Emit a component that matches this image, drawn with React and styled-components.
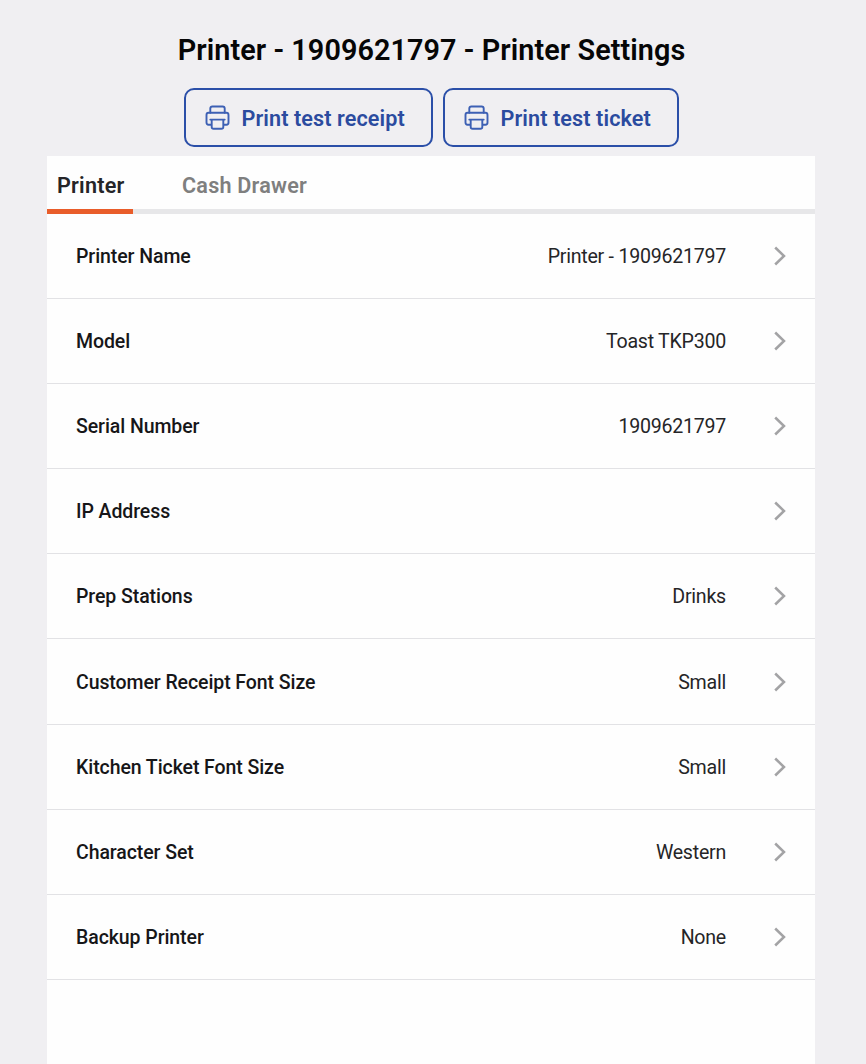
import React from 'react';
import styled, { createGlobalStyle } from 'styled-components';

const GlobalStyle = createGlobalStyle`
  * { box-sizing: border-box; }
  body { margin: 0; background: #f0eff2; font-family: Roboto, "Liberation Sans", sans-serif; }
`;

const Page = styled.main`
  height: 1064px;
  padding: 0 51px 0 47px;
  display: flex;
  flex-direction: column;
  overflow: hidden;
`;

const Title = styled.h1`
  margin: 34px 0 0;
  height: 54px;
  padding-left: 1px;
  line-height: 33px;
  font-size: 28.8px;
  font-weight: 600;
  letter-spacing: 0.08px;
  text-align: center;
  white-space: nowrap;
  color: #060606;
`;

const Actions = styled.div`
  display: flex;
  justify-content: center;
  gap: 10px;
  margin-bottom: 9px;
`;

const ActionButton = styled.button`
  width: ${(p) => p.$width}px;
  height: 59px;
  padding: 1px 0 0 19px;
  display: flex;
  align-items: center;
  gap: 11px;
  border: 2px solid #2b4fa8;
  border-radius: 10px;
  background: transparent;
  color: #2b4b9f;
  font: 600 21.6px Roboto, "Liberation Sans", sans-serif;
  letter-spacing: 0.1px;
  white-space: nowrap;
`;

const Panel = styled.section`
  flex: 1;
  background: #fefefe;
`;

const Tabs = styled.nav`
  display: flex;
  gap: 39px;
  height: 58px;
  box-shadow: inset 0 -5px #e7e7e9;
`;

const Tab = styled.a`
  height: 58px;
  padding: 0 8.5px 0 10px;
  line-height: 60px;
  font-size: 21.6px;
  font-weight: 600;
  letter-spacing: 0.22px;
  white-space: nowrap;
  color: ${(p) => (p.$active ? '#252528' : '#7f7f7f')};
  box-shadow: ${(p) => (p.$active ? 'inset 0 -5px #e95d2a' : 'none')};
`;

const Row = styled.div`
  display: flex;
  align-items: center;
  height: 85.1px;
  padding: 0 28px 0 29px;
  border-bottom: 1px solid #e2e2e5;
  white-space: nowrap;
`;

const Label = styled.span`
  flex: 1;
  padding-top: 1px;
  font-size: 19.5px;
  letter-spacing: -0.08px;
  font-weight: 500;
  color: #161618;
`;

const Value = styled.span`
  padding-top: 1px;
  font-size: 19.6px;
  letter-spacing: -0.25px;
  color: #252527;
`;

const ChevronIcon = styled.svg`
  width: 14px;
  height: 20px;
  margin-left: 47px;
  fill: none;
  stroke: #a3a3a5;
  stroke-width: 2.5;
`;

const PrinterSvg = styled.svg`
  width: 26px;
  height: 26px;
  margin-top: -1px;
  fill: none;
  stroke: #3d60b4;
  stroke-width: 1.9;
  stroke-linejoin: round;
  stroke-linecap: round;
`;

const PrinterIcon = () => (
  <PrinterSvg viewBox="0 0 26 26">
    <path d="M5.3 7.7V3.6Q5.3 1.5 7.4 1.5H17.6Q19.7 1.5 19.7 3.6V7.7" />
    <path d="M6 19.7H3.5Q1.5 19.7 1.5 17.5V10Q1.5 7.7 3.5 7.7H21.5Q23.5 7.7 23.5 10V17.5Q23.5 19.7 21.5 19.7H19" />
    <path d="M5.3 14.6H19.7M6.7 14.6V22Q6.7 23.8 8.6 23.8H16.4Q18.3 23.8 18.3 22V14.6" />
  </PrinterSvg>
);

const Chevron = () => (
  <ChevronIcon viewBox="0 0 14 20">
    <path d="M2.2 1.5L11 10L2.2 18.5" />
  </ChevronIcon>
);

const settings = [
  ['Printer Name', 'Printer - 1909621797'],
  ['Model', 'Toast TKP300'],
  ['Serial Number', '1909621797'],
  ['IP Address', ''],
  ['Prep Stations', 'Drinks'],
  ['Customer Receipt Font Size', 'Small'],
  ['Kitchen Ticket Font Size', 'Small'],
  ['Character Set', 'Western'],
  ['Backup Printer', 'None'],
];

export default function App() {
  return (
    <Page>
      <GlobalStyle />
      <Title>Printer - 1909621797 - Printer Settings</Title>
      <Actions>
        <ActionButton $width={249}><PrinterIcon />Print test receipt</ActionButton>
        <ActionButton $width={236}><PrinterIcon />Print test ticket</ActionButton>
      </Actions>
      <Panel>
        <Tabs>
          <Tab $active>Printer</Tab>
          <Tab>Cash Drawer</Tab>
        </Tabs>
        {settings.map(([label, value]) => (
          <Row key={label}>
            <Label>{label}</Label>
            <Value>{value}</Value>
            <Chevron />
          </Row>
        ))}
      </Panel>
    </Page>
  );
}
